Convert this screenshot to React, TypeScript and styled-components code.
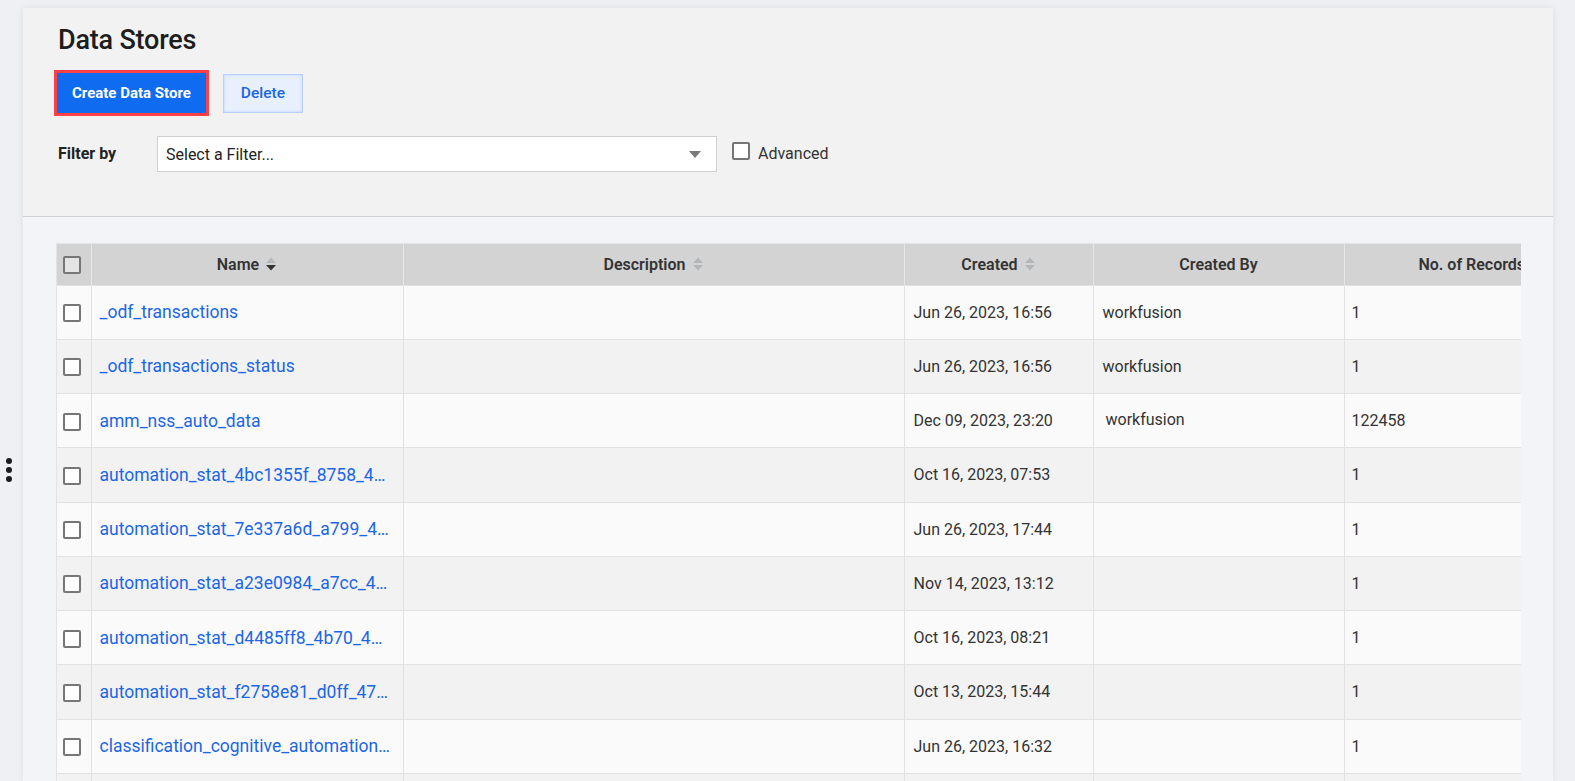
import React from 'react';
import styled, { createGlobalStyle } from 'styled-components';

const GlobalStyle = createGlobalStyle`
  html, body {
    margin: 0;
    padding: 0;
    overflow: hidden;
    background: #eff0f4;
    font-family: Roboto, "Noto Sans", Arial, sans-serif;
    color: #222;
  }
  * { box-sizing: border-box; }
`;

type Store = {
  name: string;
  description?: string;
  created: string;
  createdBy?: string;
  records: string;
};

const stores: Store[] = [
  { name: '_odf_transactions', created: 'Jun 26, 2023, 16:56', createdBy: 'workfusion', records: '1' },
  { name: '_odf_transactions_status', created: 'Jun 26, 2023, 16:56', createdBy: 'workfusion', records: '1' },
  { name: 'amm_nss_auto_data', created: 'Dec 09, 2023, 23:20', createdBy: 'workfusion', records: '122458' },
  { name: 'automation_stat_4bc1355f_8758_4a1e_9c3d', created: 'Oct 16, 2023, 07:53', records: '1' },
  { name: 'automation_stat_7e337a6d_a799_4f2b_8e01', created: 'Jun 26, 2023, 17:44', records: '1' },
  { name: 'automation_stat_a23e0984_a7cc_4d09_b6f2', created: 'Nov 14, 2023, 13:12', records: '1' },
  { name: 'automation_stat_d4485ff8_4b70_49c1_a0de', created: 'Oct 16, 2023, 08:21', records: '1' },
  { name: 'automation_stat_f2758e81_d0ff_47a3_9b55', created: 'Oct 13, 2023, 15:44', records: '1' },
  { name: 'classification_cognitive_automation_results', created: 'Jun 26, 2023, 16:32', records: '1' },
  { name: 'classification_training_set', created: 'Jun 26, 2023, 16:32', records: '1' },
];

const columns = [
  { key: 'name', label: 'Name', width: 312, sort: 'desc' },
  { key: 'description', label: 'Description', width: 501, sort: 'none' },
  { key: 'created', label: 'Created', width: 189, sort: 'none' },
  { key: 'createdBy', label: 'Created By', width: 251 },
  { key: 'records', label: 'No. of Records', width: 255 },
];

const tableWidth = 34 + columns.reduce((sum, c) => sum + c.width, 0);

const SortIcon = ({ state }: { state?: string }) => (
  <SortSvg width="12" height="16" viewBox="0 0 12 16">
    <path d="M1 7 L6 1.5 L11 7 Z" fill={state === 'asc' ? '#333' : '#b4b8bd'} />
    <path d="M1 9 L6 14.5 L11 9 Z" fill={state === 'desc' ? '#333' : '#b4b8bd'} />
  </SortSvg>
);

const App = () => {
  return (
    <>
      <GlobalStyle />
      <Page>
        <Sidebar>
          <DragHandle>
            <Dot />
            <Dot />
            <Dot />
          </DragHandle>
        </Sidebar>

        <Panel>
          <TopSection>
            <Title>Data Stores</Title>
            <Actions>
              <Highlight>
                <PrimaryButton>Create Data Store</PrimaryButton>
              </Highlight>
              <SecondaryButton>Delete</SecondaryButton>
            </Actions>
            <FilterRow>
              <FilterLabel>Filter by</FilterLabel>
              <Select>
                <SelectText>Select a Filter...</SelectText>
                <Caret />
              </Select>
              <CheckLabel>
                <Box />
                <CheckText>Advanced</CheckText>
              </CheckLabel>
            </FilterRow>
          </TopSection>

          <Body>
            <TableWrap>
              <Table style={{ width: tableWidth }}>
                <colgroup>
                  <col style={{ width: 34 }} />
                  {columns.map((c) => (
                    <col key={c.key} style={{ width: c.width }} />
                  ))}
                </colgroup>
                <thead>
                  <tr>
                    <HeadCell>
                      <Box $shade />
                    </HeadCell>
                    {columns.map((c) => (
                      <HeadCell key={c.key}>
                        <HeadInner>
                          {c.label}
                          {c.sort && <SortIcon state={c.sort} />}
                        </HeadInner>
                      </HeadCell>
                    ))}
                  </tr>
                </thead>
                <tbody>
                  {stores.map((s, i) => (
                    <Row key={s.name} $alt={i % 2 === 1}>
                      <Cell>
                        <Box />
                      </Cell>
                      <NameCell>
                        <NameLink>{s.name}</NameLink>
                      </NameCell>
                      <Cell>{s.description}</Cell>
                      <Cell>{s.created}</Cell>
                      <Cell $lift={i === 2}>{s.createdBy}</Cell>
                      <Cell $tight>{s.records}</Cell>
                    </Row>
                  ))}
                </tbody>
              </Table>
            </TableWrap>
          </Body>
        </Panel>
      </Page>
    </>
  );
};

export default App;

const Page = styled.div`
  display: flex;
  height: 100vh;
  overflow: hidden;
  padding-right: 22px;
`;

const Sidebar = styled.div`
  width: 23px;
  flex-shrink: 0;
  display: flex;
  align-items: center;
  justify-content: flex-start;
  padding-left: 6px;
`;

const DragHandle = styled.div`
  display: flex;
  flex-direction: column;
  gap: 3px;
  margin-top: 158px;
`;

const Dot = styled.span`
  width: 6px;
  height: 6px;
  border-radius: 50%;
  background: #1c1c1c;
`;

const Panel = styled.div`
  flex: 1;
  min-width: 0;
  margin-top: 8px;
  display: flex;
  flex-direction: column;
  background: #f3f4f8;
  box-shadow: 0 0 8px rgba(0, 0, 0, 0.07);
`;

const TopSection = styled.div`
  background: #f2f2f2;
  border-bottom: 1px solid #d2d2d2;
  padding: 16px 35px 0;
  height: 209px;
`;

const Title = styled.h1`
  margin: 0;
  font-size: 27px;
  font-weight: 500;
  line-height: 32px;
  color: #1d1d1d;
  letter-spacing: -0.2px;
`;

const Actions = styled.div`
  display: flex;
  align-items: center;
  gap: 14px;
  margin: 14px 0 0 -4px;
`;

const Highlight = styled.div`
  border: 3px solid #ff4044;
`;

const PrimaryButton = styled.button`
  display: block;
  height: 40px;
  padding: 0 15px;
  border: none;
  background: #0f6bf0;
  color: #fff;
  font-family: inherit;
  font-size: 15px;
  font-weight: 700;
  cursor: pointer;
`;

const SecondaryButton = styled.button`
  height: 39px;
  padding: 0 17px;
  border: 1px solid #b9d0fa;
  box-shadow: inset 0 0 3px #b9d0fa;
  background: #e8f0fd;
  color: #1b66e4;
  font-family: inherit;
  font-size: 15.5px;
  font-weight: 500;
  cursor: pointer;
`;

const FilterRow = styled.div`
  display: flex;
  align-items: flex-start;
  margin-top: 20px;
`;

const FilterLabel = styled.label`
  width: 99px;
  padding-top: 8px;
  font-size: 16px;
  font-weight: 700;
  color: #222;
`;

const Select = styled.div`
  width: 560px;
  height: 36px;
  background: #fff;
  border: 1px solid #cfcfcf;
  display: flex;
  align-items: center;
  justify-content: space-between;
  padding: 0 15px 0 8px;
`;

const SelectText = styled.span`
  font-size: 16px;
  color: #222;
`;

const Caret = styled.span`
  width: 0;
  height: 0;
  border-left: 6px solid transparent;
  border-right: 6px solid transparent;
  border-top: 7px solid #7a7a7a;
`;

const CheckLabel = styled.label`
  display: flex;
  align-items: flex-start;
  gap: 8px;
  margin: 6px 0 0 15px;
  font-size: 16px;
  line-height: 18px;
  color: #333;
`;

const CheckText = styled.span`
  padding-top: 3px;
`;

const Box = styled.span<{ $shade?: boolean }>`
  display: inline-block;
  flex-shrink: 0;
  width: 18px;
  height: 18px;
  border: 2px solid #767676;
  border-radius: 2px;
  background: ${(p) => (p.$shade ? '#e4e4e4' : '#fff')};
  vertical-align: middle;
`;

const Body = styled.div`
  padding: 26px 32px 0 33px;
  flex: 1;
  min-width: 0;
  min-height: 0;
`;

const TableWrap = styled.div`
  overflow: hidden;
  border: 1px solid #e3e3e3;
  border-right: none;
`;

const Table = styled.table`
  border-collapse: collapse;
  table-layout: fixed;
`;

const HeadCell = styled.th`
  height: 41px;
  background: #d3d3d3;
  border-left: 1px solid #e6e6e6;
  font-size: 16px;
  font-weight: 600;
  color: #333;
  text-align: center;
  padding: 0 6px;
  white-space: nowrap;

  &:first-child {
    border-left: none;
    text-align: left;
  }
`;

const HeadInner = styled.span`
  display: inline-flex;
  align-items: center;
  gap: 6px;
`;

const SortSvg = styled.svg`
  display: block;
`;

const Row = styled.tr<{ $alt: boolean }>`
  background: ${(p) => (p.$alt ? '#f2f2f2' : '#fafafa')};
  border-top: 1px solid #e2e2e2;
`;

const Cell = styled.td<{ $lift?: boolean; $tight?: boolean }>`
  height: 54.25px;
  padding: ${(p) => (p.$lift ? '0 9px 3px 12px' : p.$tight ? '0 7px' : '0 9px')};
  border-left: 1px solid #e2e2e2;
  font-size: 16px;
  color: #333;
  white-space: nowrap;
  overflow: hidden;
  text-overflow: ellipsis;

  &:first-child {
    border-left: none;
    padding: 0 0 0 6px;
  }
`;

const NameCell = styled(Cell)`
  padding: 0 12px 0 8px;
  font-size: 17.5px;
  color: #1a66e8;
`;

const NameLink = styled.a`
  color: inherit;
  text-decoration: none;
  cursor: pointer;
`;
